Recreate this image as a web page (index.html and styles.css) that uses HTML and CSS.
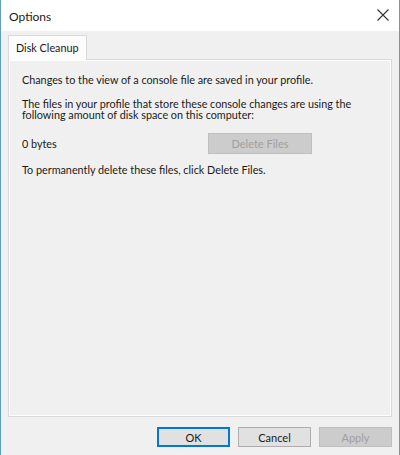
FILE: index.html
```html
<!DOCTYPE html>
<html lang="en">
<head>
    <meta charset="UTF-8">
    <title>Options</title>
    <link rel="stylesheet" href="styles.css">
</head>
<body>
    <div class="window">
        <div class="titlebar">
            <span class="title">Options</span>
            <svg class="close" width="12" height="12" viewBox="0 0 12 12">
                <path d="M0.5 0.5 L11.5 11.5 M11.5 0.5 L0.5 11.5" stroke="#333" stroke-width="1.1" fill="none"/>
            </svg>
        </div>
        <div class="client">
            <div class="tabs">
                <div class="tab">Disk Cleanup</div>
            </div>
            <div class="panel">
                <p class="first">Changes to the view of a console file are saved in your profile.</p>
                <p>The files in your profile that store these console changes are using the following amount of disk space on this computer:</p>
                <div class="size-row">
                    <span class="size">0 bytes</span>
                    <button class="btn" disabled>Delete Files</button>
                </div>
                <p>To permanently delete these files, click Delete Files.</p>
            </div>
            <div class="buttons">
                <button class="btn default">OK</button>
                <button class="btn">Cancel</button>
                <button class="btn" disabled>Apply</button>
            </div>
        </div>
    </div>
</body>
</html>
```

FILE: styles.css
```css
html, body {
    margin: 0;
    padding: 0;
}

body {
    font-family: Lato, 'Liberation Sans', sans-serif;
    font-size: 10.8px;
    color: #1a1a1a;
    background-color: #f0f0f0;
}

.window {
    width: 400px;
    height: 455px;
    box-sizing: border-box;
    border-left: 1px solid #5e9ec2;
    border-right: 1px solid #5e9ec2;
    display: flex;
    flex-direction: column;
}

.titlebar {
    height: 31px;
    background-color: #ffffff;
    display: flex;
    align-items: center;
    justify-content: space-between;
    padding: 0 10px 0 8px;
    flex-shrink: 0;
}

.title {
    font-size: 12px;
    margin-top: 1px;
}

.close {
    margin-top: -1px;
}

.client {
    flex: 1;
    padding: 4px 7px 0 7px;
    display: flex;
    flex-direction: column;
}

.tabs {
    display: flex;
    height: 24px;
}

.tab {
    background-color: #fcfcfc;
    border: 1px solid #d9d9d9;
    border-bottom: none;
    padding: 0 7px;
    line-height: 23px;
    margin-bottom: -1px;
    position: relative;
    z-index: 1;
}

.panel {
    height: 358px;
    box-sizing: border-box;
    border: 1px solid #d9d9d9;
    box-shadow: inset 0 0 0 1px #ffffff;
    padding: 14px 13px;
}

.panel p {
    margin: 0 0 13px;
    line-height: 11px;
}

.size-row {
    display: flex;
    align-items: center;
    margin: 0 0 10px;
    line-height: 11px;
}

.size {
    width: 186px;
}

.btn {
    font-family: inherit;
    font-size: 11px;
    width: 73px;
    height: 20px;
    padding: 0;
    background-color: #e1e1e1;
    border: 1px solid #adadad;
    color: #1a1a1a;
}

.btn:disabled {
    background-color: #cccccc;
    border-color: #bfbfbf;
    color: #a0a0a0;
}

.size-row .btn {
    width: 104px;
    height: 21px;
}

.btn.default {
    border: 2px solid #0078d7;
}

.buttons {
    display: flex;
    justify-content: flex-end;
    gap: 8px;
    margin-top: 10px;
}
```
